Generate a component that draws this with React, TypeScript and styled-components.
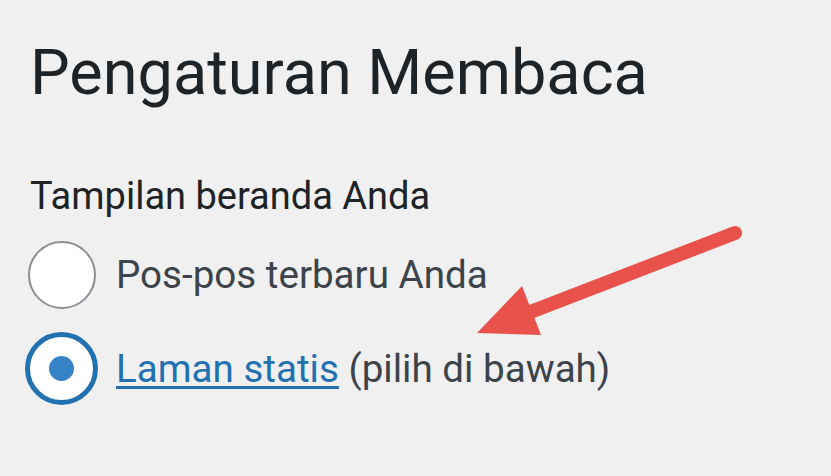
import React from "react";
import styled, { createGlobalStyle } from "styled-components";

const Global = createGlobalStyle`
  html, body { margin: 0; padding: 0; background: #f0f0f1; }
  body { font-family: Roboto, "Noto Sans", sans-serif; }
`;

const Page = styled.div`
  position: relative;
  width: 831px;
  height: 476px;
  overflow: hidden;
  box-sizing: border-box;
  padding: 28px 0 0 30px;
  background: #f0f0f1;
`;

const Title = styled.h1`
  margin: 0;
  font-size: 63px;
  font-weight: 400;
  line-height: 90px;
  color: #1d2327;
`;

const Label = styled.div`
  margin-top: 53px;
  font-size: 38px;
  line-height: 50px;
  color: #1d2327;
`;

const Options = styled.div`
  display: flex;
  flex-direction: column;
  gap: 22px;
  margin-top: 19px;
`;

const Option = styled.label`
  display: flex;
  align-items: center;
  gap: 20px;
  font-size: 38.6px;
  line-height: 70px;
  color: #3c434a;
`;

const Radio = styled.span<{ $checked?: boolean }>`
  box-sizing: border-box;
  width: ${(p) => (p.$checked ? 73 : 68)}px;
  height: ${(p) => (p.$checked ? 73 : 68)}px;
  margin-left: ${(p) => (p.$checked ? -5 : -2)}px;
  margin-right: ${(p) => (p.$checked ? -2 : 0)}px;
  border-radius: 50%;
  background: #fff;
  border: ${(p) => (p.$checked ? "5px solid #2271b1" : "2px solid #8c8f94")};
  display: flex;
  align-items: center;
  justify-content: center;
  flex-shrink: 0;
`;

const Dot = styled.span`
  width: 25px;
  height: 25px;
  border-radius: 50%;
  background: #3582c4;
`;

const Link = styled.a`
  color: #2271b1;
  text-decoration: underline;
  text-underline-offset: 4px;
  text-decoration-thickness: 2.5px;
`;

const Arrow = styled.svg`
  position: absolute;
  left: 0;
  top: 0;
  pointer-events: none;
`;

export default function App() {
  return (
    <>
      <Global />
      <Page>
        <Title>Pengaturan Membaca</Title>
        <Label>Tampilan beranda Anda</Label>
        <Options>
          <Option>
            <Radio />
            Pos-pos terbaru Anda
          </Option>
          <Option>
            <Radio $checked>
              <Dot />
            </Radio>
            <span>
              <Link href="#">Laman statis</Link> (pilih di bawah)
            </span>
          </Option>
        </Options>
        <Arrow width="831" height="476" viewBox="0 0 831 476">
          <line x1="735" y1="233" x2="520" y2="316" stroke="#e9524a" strokeWidth="14" strokeLinecap="round" />
          <polygon points="477,333 522,286 541,335" fill="#e9524a" />
        </Arrow>
      </Page>
    </>
  );
}
